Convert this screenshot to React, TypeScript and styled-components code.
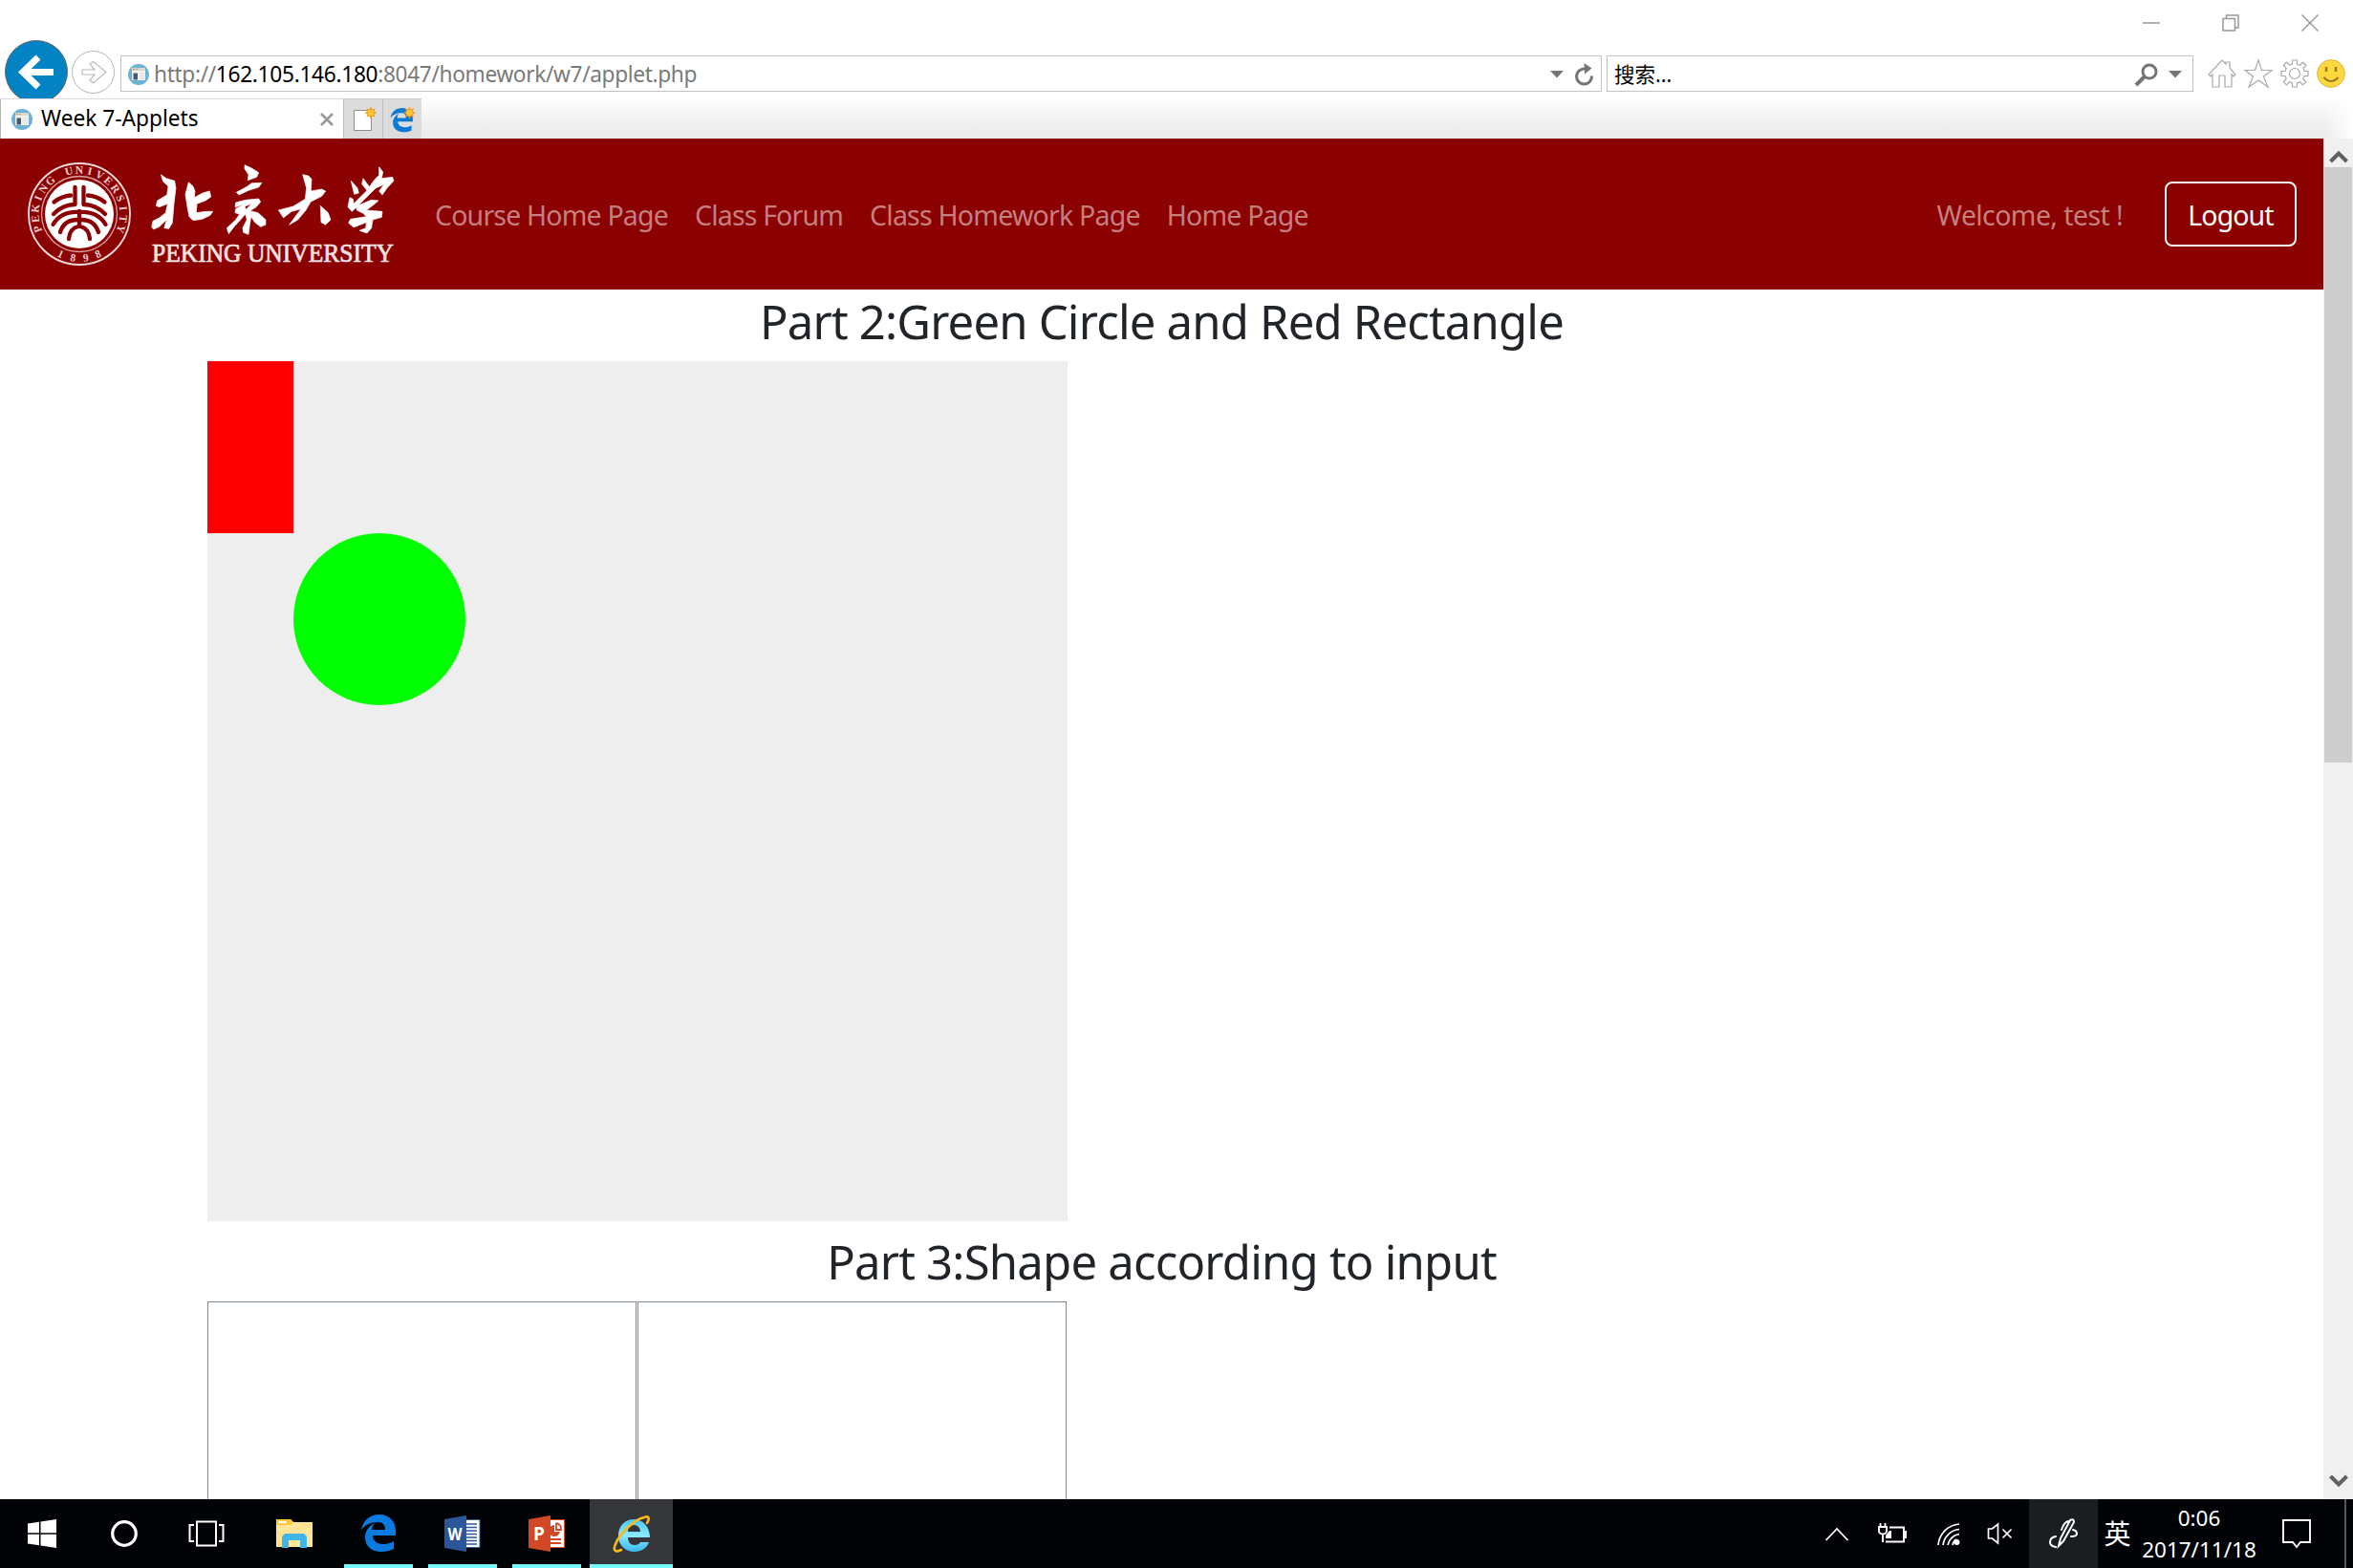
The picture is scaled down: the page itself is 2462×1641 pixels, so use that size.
import React from 'react';
import styled, { createGlobalStyle } from 'styled-components';

const Global = createGlobalStyle`
  *{box-sizing:border-box}
  html,body{margin:0;padding:0;overflow:hidden;background:#fff}
  body{font-family:"Noto Sans","Open Sans","Noto Sans CJK SC",sans-serif}
  svg{display:block;flex:none;overflow:visible}
`;

const Screen = styled.div`
  width:2462px;height:1641px;display:flex;flex-direction:column;background:#fff;overflow:hidden;
`;
const Text = styled.span<{ $size: number; $track?: number; $color?: string }>`
  font-size:${p => p.$size}px;letter-spacing:${p => p.$track ?? 0}px;color:${p => p.$color ?? 'inherit'};
  white-space:pre;line-height:1.36;
`;

/* window chrome */
const TitleBar = styled.div`
  height:42px;flex:none;display:flex;justify-content:flex-end;align-items:center;gap:65px;padding:6px 36px 0 0;
`;
const AddressRow = styled.div`
  height:61px;flex:none;display:flex;align-items:flex-start;padding-left:5px;overflow:hidden;
`;
const Forward = styled.div`margin:11px 0 0 4px;`;
const Field = styled.div<{ $w: number; $ml: number }>`
  width:${p => p.$w}px;margin:16px 0 0 ${p => p.$ml}px;height:38px;border:1px solid #c3c3c3;border-width:1.5px;
  display:flex;align-items:center;padding:1px 6px 0 7px;
`;
const Url = styled.div`padding-top:2px;line-height:1;`;
const Grow = styled.div`flex:1;`;
const Tools = styled.div`display:flex;gap:8px;margin:20px 0 0 15px;`;
const TabRow = styled.div`
  height:42px;flex:none;display:flex;background:linear-gradient(#fff 0,#fbfbfb 12%,#f0f0f0 62%,#ececec 100%);
`;
const Tab = styled.div`
  width:359px;background:#fff;border-left:1px solid #b5b5b5;display:flex;align-items:center;padding:0 10px 0 11px;
  border-top:1px solid #dcdcdc;
`;
const TabButton = styled.div`
  width:41px;background:#dcdcdc;border-left:1px solid #bdbdbd;border-top:1px solid #cbcbcb;
  display:flex;align-items:center;justify-content:center;
`;
const TabFade = styled.div`width:30px;margin-left:auto;background:linear-gradient(90deg,transparent,#fff);`;

/* page */
const Viewport = styled.div`height:1424px;flex:none;display:flex;`;
const Page = styled.div`width:2431px;overflow:hidden;`;
const Navbar = styled.nav`
  height:158px;background:#8b0000;display:flex;align-items:center;padding:0 28px;
`;
const Links = styled.div`display:flex;margin-left:41px;gap:28px;color:#c57f7f;padding-top:3px;`;
const Account = styled.div`display:flex;align-items:center;margin-left:auto;gap:44px;color:#c57f7f;
  & > span{padding-top:3px}`;
const Logout = styled.button`
  width:138px;height:68px;border:2px solid #f8f9fa;border-radius:8px;background:none;color:#f8f9fa;
  font-family:inherit;padding:3px 0 0;display:flex;align-items:center;justify-content:center;
`;
const Heading = styled.h2`
  margin:0;font-weight:400;text-align:center;color:#212529;height:75px;line-height:70px;
`;
const Applet = styled.div`
  margin-left:217px;width:900px;height:900px;background:#eee;
`;
const RedRect = styled.div`width:90px;height:180px;background:#f00;`;
const GreenCircle = styled.div`width:180px;height:180px;margin-left:90px;border-radius:50%;background:#0f0;`;
const SecondHeading = styled(Heading)`height:84px;line-height:88px;padding-top:8px;`;
const Inputs = styled.div`margin-left:217px;display:flex;gap:1px;`;
const InputArea = styled.div`width:449px;height:300px;border:1px solid #7a8a99;`;

const Scrollbar = styled.div`
  width:31px;background:#f0f0f0;display:flex;flex-direction:column;align-items:center;justify-content:space-between;
  padding-bottom:12px;
`;
const ScrollTop = styled.div`display:flex;flex-direction:column;align-items:center;padding-top:12px;gap:4px;`;
const Thumb = styled.div`width:29px;height:623px;background:#cdcdcd;`;

/* taskbar */
const Taskbar = styled.div`height:72px;flex:none;background:#010307;display:flex;color:#fff;`;
const Task = styled.div<{ $w?: number; $run?: boolean; $active?: boolean }>`
  width:${p => p.$w ?? 88}px;display:flex;flex-direction:column;align-items:center;justify-content:flex-end;
  background:${p => (p.$active ? '#35363a' : 'none')};
  &::after{content:"";width:${p => (p.$active ? 87 : 72)}px;height:4px;background:${p => (p.$run ? '#76f8fd' : 'transparent')};}
`;
const TaskIcon = styled.div`flex:1;display:flex;align-items:center;padding-top:3px;`;
const Tray = styled.div`display:flex;align-items:center;margin-left:auto;`;
const TrayItem = styled.div<{ $w: number; $lit?: boolean }>`
  width:${p => p.$w}px;height:72px;display:flex;align-items:center;justify-content:center;
  background:${p => (p.$lit ? '#1b1e21' : 'none')};
`;
const Clock = styled.div`width:130px;display:flex;flex-direction:column;align-items:center;height:72px;padding-top:4px;
  & > span{line-height:32.5px}`;
const ShowDesktop = styled.div`width:9px;height:72px;border-left:2px solid #55585b;`;
const Gap = styled.div<{ $w: number }>`width:${p => p.$w}px;flex:none;`;

const PageIcon = () => (
  <svg width="22" height="22" viewBox="0 0 22 22">
    <circle cx="11" cy="11" r="11" fill="#6db1d5" />
    <path d="M4 5h14v12H4z" fill="#f4f1e9" />
    <path d="M4 4h14v3H4z" fill="#ddd8cc" />
    <circle cx="6" cy="5.5" r=".8" fill="#d9695c" /><circle cx="9" cy="5.5" r=".8" fill="#79b36d" />
    <path d="M5.500 9.500h4.500v7H5.500z" fill="#43597c" />
    <path d="M12 10h5M12 12.500h5M12 15h5" stroke="#ddd" />
  </svg>
);
const Down = () => <svg width="14" height="9" viewBox="0 0 14 9"><path d="M0 1h14L7 8.500z" fill="#757575" /></svg>;

const EdgeShape = 'M0 16C2 6 9 0 19 0c11 0 17 8 17 17v5H12c0 6 5 9 11 9 4 0 8-1 11-3v8c-4 2-8 3-13 3C11 39 4 33 4 24c0-7 4-12 10-15-2 2-3 5-3 7h14c0-5-2-8-8-8C9 8 4 11 0 16z';

const Spark = ({ x, y }: { x: number; y: number }) => (
  <g transform={`translate(${x} ${y})`}>
    <path d="M0-6.500 1.400-3.400 4.600-4.600 3.400-1.400 6.500 0 3.400 1.400 4.600 4.600 1.400 3.400 0 6.500-1.400 3.400-4.600 4.600-3.400 1.400-6.500 0-3.400-1.400-4.600-4.600-1.400-3.400z" fill="#f39a12" />
    <circle r="3.200" fill="#ffc633" />
  </g>
);

const ringLetters = 'PEKING UNIVERSITY'.split('');
const yearDigits = '1898'.split('');

const Seal = () => (
  <svg width="110" height="110" viewBox="0 0 110 110">
    <circle cx="55" cy="55" r="53" fill="none" stroke="#f0d8d8" strokeWidth="1.900" />
    <circle cx="55" cy="55" r="39.500" fill="none" stroke="#d9a3a3" strokeWidth="1.300" />
    <circle cx="55" cy="55" r="36" fill="#fff" />
    <g fill="#ecd0d0" fontFamily="Liberation Serif, serif" fontSize="11.500" fontWeight="700" textAnchor="middle">
      {ringLetters.map((c, i) => c !== ' ' && (
        <text key={i} x="55" y="12.600" transform={`rotate(${-110 + i * 13.75} 55 55)`}>{c}</text>
      ))}
      {yearDigits.map((c, i) => (
        <text key={i} x="55" y="105" transform={`rotate(${25 - i * 16.7} 55 55)`}>{c}</text>
      ))}
    </g>
    <g fill="none" stroke="#8b0000" strokeWidth="4.300" strokeLinecap="round" strokeLinejoin="round">
      <path d="M50.500 27v18Q38 45 28 55M59.500 27v18Q72 45 82 55" />
      <path d="M46 35.500Q37 36 28.500 42.500M64 35.500Q73 36 81.500 42.500" />
      <path d="M55 52v14M54 53Q36 52 27.500 66M56 53Q74 52 82.500 66" />
      <path d="M53 61Q39 61 35 74M57 61Q71 61 75 74" />
      <path d="M54 68Q45 70 44 81M56 68Q65 70 66 81" />
    </g>
  </svg>
);

const LogoWords = () => (
  <svg width="257" height="110" viewBox="0 0 257 110">
    <g fill="#fff" transform="translate(0 -169) scale(.33333) translate(-471 0)" stroke="#fff" strokeWidth="2" strokeLinejoin="round" fillRule="evenodd">
      <path d="M505 548L522 560 548 568 552 590 546 640 541 700 530 718 515 716 520 700 523 690 500 712 482 720 476 712 480 694 500 684 520 668 526 640 500 650 490 646 494 630 524 612 528 585 512 570Z" />
      <path d="M592 572L606 585 612 600 610 620 636 606 658 600 662 618 645 630 618 640 616 668 645 664 668 664 660 676 635 688 606 692 594 680 588 650 582 610Z" />
      <path d="M768 518L790 528 812 542 806 556 778 566 780 548 768 530ZM742 604L775 586 790 575 822 574 812 588 780 598 750 612Z" />
      <path d="M740 636L770 628 812 624 818 634 804 650 785 662 810 668 834 690 834 706 818 712 800 698 788 680 784 705 780 736 764 730 762 715 775 690 770 672 755 690 735 712 718 734 712 716 740 690 752 672 738 668 740 655 765 642 738 650ZM768 648L790 640 772 658Z" />
      <path d="M950 548L968 552 978 562 976 600 1010 594 1022 600 1010 616 975 634 960 660 935 690 908 706 930 676 945 656 915 664 890 684 874 660 920 648 958 625 962 590ZM1006 646L1030 668 1038 690 1022 706 1008 698Z" />
      <path d="M1102 568L1122 590 1126 606 1112 610ZM1140 560L1162 590 1154 600 1136 578Z" />
      <path d="M1190 524L1202 540 1198 560 1232 556 1236 568 1215 590 1200 612 1190 600 1205 580 1180 590 1160 610 1130 640 1105 664 1092 650 1098 620 1108 625 1110 640 1150 600 1175 565 1190 550Z" />
      <path d="M1118 648L1165 628 1188 630 1170 645 1150 660 1200 664 1198 682 1170 690 1166 716 1152 732 1128 724 1148 716 1150 698 1110 714 1094 700 1100 688 1150 680 1140 670 1120 660Z" />
    </g>
    <text x="2" y="104.800" fill="#f4e3e3" fontFamily="Liberation Serif, serif" fontSize="27" textLength="253" lengthAdjust="spacingAndGlyphs" stroke="#f4e3e3" strokeWidth=".7">PEKING UNIVERSITY</text>
  </svg>
);

export default function App() {
  return (
    <Screen>
      <Global />
      <TitleBar>
        <svg width="18" height="18" viewBox="0 0 18 18"><path d="M0 9h18" stroke="#999" strokeWidth="1.500" /></svg>
        <svg width="18" height="18" viewBox="0 0 18 18"><path d="M1 4.500h12.500V17H1zM4.500 4V1H17v13h-3" fill="none" stroke="#999" strokeWidth="1.500" /></svg>
        <svg width="18" height="18" viewBox="0 0 18 18"><path d="M.5.5l17 17M17.500.5l-17 17" stroke="#999" strokeWidth="1.500" /></svg>
      </TitleBar>
      <AddressRow>
        <svg width="66" height="66" viewBox="0 0 66 66">
          <circle cx="33" cy="33" r="32.500" fill="#0483c4" stroke="#666" />
          <path d="M51 33.500H19M35 18L19 33.500 35 49" fill="none" stroke="#fff" strokeWidth="7" />
        </svg>
        <Forward>
          <svg width="45" height="45" viewBox="0 0 45 45">
            <circle cx="22.500" cy="22.500" r="22" fill="#fff" stroke="#b5b5b5" />
            <path d="M11 20h13l-5-6 3.500-2.500L36 22.500 22.500 34 19 31l5-6H11z" fill="none" stroke="#bcbcbc" strokeWidth="1.200" />
          </svg>
        </Forward>
        <Field $w={1550} $ml={6}>
          <PageIcon />
          <Gap $w={5} />
          <Url><Text $size={22.7} $track={-0.36} $color="#7a7a7a">http://<Text $size={22.7} $track={-0.3} $color="#000">162.105.146.180</Text>:8047/homework/w7/applet.php</Text></Url>
          <Grow />
          <Down />
          <Gap $w={12} />
          <svg width="21" height="24" viewBox="0 0 21 24"><path d="M17.500 13.500A8 8 0 1 1 10 6" fill="none" stroke="#757575" strokeWidth="3" /><path d="M9.500 0l8 5.500-7.500 6z" fill="#757575" /></svg>
        </Field>
        <Field $w={614} $ml={5}>
          <Text $size={21.5}>搜索...</Text>
          <Grow />
          <svg width="24" height="24" viewBox="0 0 24 24"><circle cx="15" cy="9" r="7" fill="none" stroke="#757575" strokeWidth="3" /><path d="M10 14l-9 9" stroke="#757575" strokeWidth="4" /></svg>
          <Gap $w={11} />
          <Down />
          <Gap $w={5} />
        </Field>
        <Tools>
          <svg width="30" height="30" viewBox="0 0 30 30"><path d="M1 16L15 1l4 4V3h4v6l6 7-2 2-2-2v13h-7V17h-6v12H5V16l-2 2z" fill="#fff" stroke="#aaa" strokeWidth="1.200" /></svg>
          <svg width="30" height="30" viewBox="0 0 30 30"><path d="M15 1l3.500 10.500H29L20.500 18 25 29l-10-7-10 7 4.500-11L1 11.500h10.500z" fill="#fff" stroke="#aaa" strokeWidth="1.200" /></svg>
          <svg width="30" height="30" viewBox="0 0 30 30"><path d="M12.500 1h5v4l3 1.200 3-3L27 6.500l-3 3 1.200 3H29v5h-4l-1.200 3 3 3-3.300 3.300-3-3-3 1.200v4h-5v-4l-3-1.200-3 3L3.200 23.500l3-3-1.200-3H1v-5h4l1.200-3-3-3 3.300-3.300 3 3 3-1.200z" fill="#fff" stroke="#aaa" strokeWidth="1.200" /><circle cx="15" cy="15" r="5.500" fill="#fff" stroke="#aaa" strokeWidth="1.200" /></svg>
          <svg width="30" height="30" viewBox="0 0 30 30"><circle cx="15" cy="15" r="14.400" fill="#ffd83d" stroke="#d8b44c" /><path d="M7.500 19q7.500 8 15 0" fill="none" stroke="#9a7a20" strokeWidth="2" /><path d="M10 8v5M20 8v5" stroke="#9a7a20" strokeWidth="2.400" /></svg>
        </Tools>
      </AddressRow>
      <TabRow>
        <Tab>
          <PageIcon />
          <Gap $w={9} />
          <Text $size={22.7}>Week 7-Applets</Text>
          <Grow />
          <svg width="14" height="14" viewBox="0 0 14 14"><path d="M1 1l12 12M13 1L1 13" stroke="#999" strokeWidth="2.600" /></svg>
        </Tab>
        <TabButton>
          <svg width="28" height="28" viewBox="0 0 28 28"><path d="M4.500 4.500h18v21h-18z" fill="#fff" stroke="#8d8d8d" /><Spark x={22} y={7} /></svg>
        </TabButton>
        <TabButton>
          <svg width="28" height="28" viewBox="0 0 28 28"><path d={EdgeShape} transform="translate(1.500 2) scale(.65)" fill="#0a7ad8" /><Spark x={21.5} y={7} /></svg>
        </TabButton>
        <TabFade />
      </TabRow>
      <Viewport>
        <Page>
          <Navbar>
            <Seal />
            <Gap $w={19} />
            <LogoWords />
            <Links>
              <Text $size={28.5} $track={-0.82}>Course Home Page</Text>
              <Text $size={28.5} $track={-0.82}>Class Forum</Text>
              <Text $size={28.5} $track={-0.78}>Class Homework Page</Text>
              <Text $size={28.5} $track={-0.82}>Home Page</Text>
            </Links>
            <Account>
              <Text $size={28.5} $track={-0.6}>Welcome, test !</Text>
              <Logout><Text $size={28.5} $track={-0.9}>Logout</Text></Logout>
            </Account>
          </Navbar>
          <Heading><Text $size={49} $track={-0.8}>Part 2:Green Circle and Red Rectangle</Text></Heading>
          <Applet>
            <RedRect />
            <GreenCircle />
          </Applet>
          <SecondHeading><Text $size={49} $track={-0.77}>Part 3:Shape according to input</Text></SecondHeading>
          <Inputs><InputArea /><InputArea /></Inputs>
        </Page>
        <Scrollbar>
          <ScrollTop>
            <svg width="20" height="14" viewBox="0 0 20 14"><path d="M1.500 12L10 3.500 18.500 12" fill="none" stroke="#606060" strokeWidth="4" /></svg>
            <Thumb />
          </ScrollTop>
          <svg width="20" height="14" viewBox="0 0 20 14"><path d="M1.500 2L10 10.500 18.500 2" fill="none" stroke="#606060" strokeWidth="4" /></svg>
        </Scrollbar>
      </Viewport>
      <Taskbar>
        <Task $w={87}><TaskIcon>
          <svg width="30" height="30" viewBox="0 0 30 30"><path d="M0 4.500l12-1.800v11.600H0zM13.500 2.400L30 0v14.300H13.500zM0 15.700h12v11.600L0 25.500zM13.500 15.700H30V30l-16.500-2.400z" fill="#fff" /></svg>
        </TaskIcon></Task>
        <Task $w={86}><TaskIcon>
          <svg width="30" height="30" viewBox="0 0 30 30"><circle cx="15" cy="15" r="12.300" fill="none" stroke="#fff" strokeWidth="3.200" /></svg>
        </TaskIcon></Task>
        <Task $w={86}><TaskIcon>
          <svg width="38" height="28" viewBox="0 0 38 28"><path d="M9 1.500h20v25H9zM6 5H1.500v17H6M32 5h4.500v17H32" fill="none" stroke="#fff" strokeWidth="2" /></svg>
        </TaskIcon></Task>
        <Task $w={97}><TaskIcon>
          <svg width="38" height="32" viewBox="0 0 38 32"><path d="M0 1h15l3 3h20v26H0z" fill="#ffe595" /><path d="M0 1h15l3 3-3 3H0z" fill="#fbc935" /><path d="M2.500 4h8" stroke="#fff" strokeWidth="2.200" /><path d="M6 31V19l3-3h20l3 3v12h-7v-8H13v8z" fill="#3fb6ea" /></svg>
        </TaskIcon></Task>
        <Task $w={80} $run><TaskIcon>
          <svg width="36" height="39" viewBox="0 0 36 39"><path d={EdgeShape} fill="#0a7ae0" /></svg>
        </TaskIcon></Task>
        <Gap $w={4} />
        <Task $run><TaskIcon>
          <svg width="38" height="38" viewBox="0 0 38 38"><path d="M22 4.500h15v29H22z" fill="#fff" stroke="#2b579a" /><path d="M23 9h11M23 12.500h11M23 16h11M23 19.500h11M23 23h11M23 26.500h11M23 30h11" stroke="#2b579a" strokeWidth="1.500" /><path d="M0 4l23-4v38L0 34z" fill="#2b579a" /><text x="11" y="25.500" fill="#fff" fontFamily="Open Sans, sans-serif" fontWeight="700" fontSize="17" textAnchor="middle" textLength="15" lengthAdjust="spacingAndGlyphs">W</text></svg>
        </TaskIcon></Task>
        <Task $run><TaskIcon>
          <svg width="38" height="38" viewBox="0 0 38 38"><path d="M22 4.500h15.500v29H22z" fill="#fff" stroke="#d24726" /><path d="M27 10a6 6 0 1 0 6 7h-6z" fill="#d24726" /><path d="M29 8v7h5a6 6 0 0 0-5-7M23 25h11M23 29h11" fill="none" stroke="#d24726" strokeWidth="1.800" /><path d="M0 4l23-4v38L0 34z" fill="#d24726" /><text x="11" y="26" fill="#fff" fontFamily="Open Sans, sans-serif" fontWeight="700" fontSize="19" textAnchor="middle">P</text></svg>
        </TaskIcon></Task>
        <Gap $w={1} />
        <Task $w={87} $run $active><TaskIcon>
          <svg width="40" height="40" viewBox="0 0 40 40"><defs><linearGradient id="ie" x2="0" y2="1"><stop stopColor="#48c6f4" /><stop offset=".5" stopColor="#8be9ff" /><stop offset="1" stopColor="#38b8ee" /></linearGradient></defs>
            <path d="M22 5C32 5 39 13 39 24H16c0 5 3 8 7 8 3 0 5-1 6-3h9c-2 6-8 10-15 10C13 39 6 32 6 22S13 5 22 5zM16 18h13c0-4-3-7-6.500-7S16 14 16 18z" fill="url(#ie)" fillRule="evenodd" />
            <path d="M36 9c3-5 2-8-3-6C23 5 8 19 3 31c-3 7 0 9 6 6" fill="none" stroke="#f9b916" strokeWidth="2.600" strokeLinecap="round" /></svg>
        </TaskIcon></Task>
        <Tray>
          <TrayItem $w={42}><svg width="26" height="15" viewBox="0 0 26 15"><path d="M1.500 14L13 2l11.500 12" fill="none" stroke="#fff" strokeWidth="1.800" /></svg></TrayItem>
          <TrayItem $w={73}><svg width="30" height="24" viewBox="0 0 30 24"><path d="M12 5.500h15v15H8M27 10h2v6h-2M5 12v9M2.500 1v5M7.500 1v5M1 5h8v4q0 3.500-4 3.500T1 9z" fill="none" stroke="#fff" strokeWidth="1.900" /><path d="M8 17v-3l4-5h2v8z" fill="#fff" /></svg></TrayItem>
          <TrayItem $w={46}><svg width="24" height="26" viewBox="0 0 24 26"><g fill="none" stroke="#fff" strokeWidth="1.700"><path d="M1 25A24 24 0 0 1 23 3M6 25A19 19 0 0 1 23 8.500M11 25A14 14 0 0 1 23 13.500M16 25A9 9 0 0 1 20 19" /></g><circle cx="20.500" cy="22" r="3" fill="#fff" /></svg></TrayItem>
          <TrayItem $w={61}><svg width="28" height="24" viewBox="0 0 28 24"><path d="M1.500 7h4l6-5v20l-6-5h-4zM16.500 7.500l9 9M25.500 7.500l-9 9" fill="none" stroke="#fff" strokeWidth="1.700" /></svg></TrayItem>
          <TrayItem $w={72} $lit><svg width="30" height="32" viewBox="0 0 30 32"><path d="M10 29l2-8L22 2q4-2 4 2L15 24zM21 3q-5 0-8 9M7 19q-6 1-6 6 0 4 6 5M25 12q4 1 4 4 0 3-6 3" fill="none" stroke="#fff" strokeWidth="2" strokeLinecap="round" /></svg></TrayItem>
          <TrayItem $w={41}><Text $size={28}>英</Text></TrayItem>
          <Clock><Text $size={22.5}>0:06</Text><Text $size={22.5}>2017/11/18</Text></Clock>
          <TrayItem $w={73}><svg width="30" height="32" viewBox="0 0 30 32"><path d="M1 2h28v23H19l-4 5-4-5H1z" fill="none" stroke="#fff" strokeWidth="1.900" /></svg></TrayItem>
          <Gap $w={14} />
          <ShowDesktop />
        </Tray>
      </Taskbar>
    </Screen>
  );
}
